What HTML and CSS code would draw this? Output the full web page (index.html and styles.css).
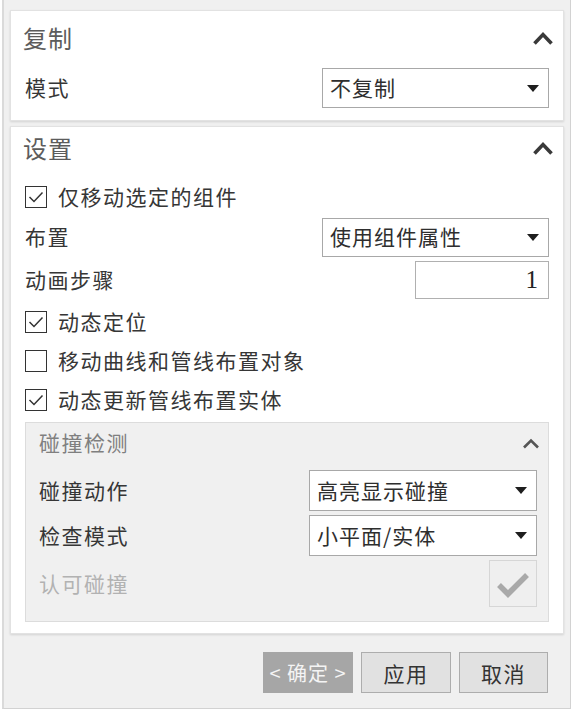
FILE: index.html
```html
<!DOCTYPE html>
<html lang="zh-CN">
<head>
  <meta charset="UTF-8">
  <title>移动组件</title>
  <link rel="stylesheet" href="styles.css">
</head>
<body>

  <div class="dialog">

    <section class="group group-copy">
      <div class="group-head">
        <span class="group-title">复制</span>
        <svg class="caret" width="22" height="14" viewBox="0 0 22 14"><polyline points="2.5,12.5 11,3.5 19.5,12.5" /></svg>
      </div>
      <div class="row row-select">
        <span class="label">模式</span>
        <div class="select">
          <span>不复制</span>
          <i class="arrow"></i>
        </div>
      </div>
    </section>

    <section class="group group-settings">
      <div class="group-head">
        <span class="group-title">设置</span>
        <svg class="caret" width="22" height="14" viewBox="0 0 22 14"><polyline points="2.5,12.5 11,3.5 19.5,12.5" /></svg>
      </div>

      <div class="check-row">
        <span class="box"><svg width="20" height="20" viewBox="0 0 20 20"><polyline points="3.5,10 8,14.5 16.5,5.5" /></svg></span>
        <span class="label">仅移动选定的组件</span>
      </div>

      <div class="row row-select">
        <span class="label">布置</span>
        <div class="select">
          <span>使用组件属性</span>
          <i class="arrow"></i>
        </div>
      </div>

      <div class="row row-input">
        <span class="label">动画步骤</span>
        <div class="num-input">1</div>
      </div>

      <div class="check-row">
        <span class="box"><svg width="20" height="20" viewBox="0 0 20 20"><polyline points="3.5,10 8,14.5 16.5,5.5" /></svg></span>
        <span class="label">动态定位</span>
      </div>
      <div class="check-row">
        <span class="box"></span>
        <span class="label">移动曲线和管线布置对象</span>
      </div>
      <div class="check-row">
        <span class="box"><svg width="20" height="20" viewBox="0 0 20 20"><polyline points="3.5,10 8,14.5 16.5,5.5" /></svg></span>
        <span class="label">动态更新管线布置实体</span>
      </div>

      <div class="sub">
        <div class="sub-head">
          <span class="sub-title">碰撞检测</span>
          <svg class="sub-caret" width="18" height="11" viewBox="0 0 18 11"><polyline points="2,9.5 9,2.5 16,9.5" /></svg>
        </div>
        <div class="sub-row">
          <span class="label">碰撞动作</span>
          <div class="select">
            <span>高亮显示碰撞</span>
            <i class="arrow"></i>
          </div>
        </div>
        <div class="sub-row">
          <span class="label">检查模式</span>
          <div class="select">
            <span>小平面/实体</span>
            <i class="arrow"></i>
          </div>
        </div>
        <div class="sub-row sub-row-btn">
          <span class="label disabled">认可碰撞</span>
          <button class="tick-btn" disabled>
            <svg width="38" height="34" viewBox="0 0 38 34"><polyline points="5,18 14,27 33,8" /></svg>
          </button>
        </div>
      </div>
    </section>

    <div class="footer">
      <button class="btn btn-ok">&lt; 确定 &gt;</button>
      <button class="btn">应用</button>
      <button class="btn">取消</button>
    </div>

  </div>

</body>
</html>
```

FILE: styles.css
```css
body {
  margin: 0;
  background: #fff;
  font-family: "Noto Sans CJK SC", "Microsoft YaHei", sans-serif;
  color: #363636;
  line-height: 1.2;
}

.dialog {
  box-sizing: border-box;
  width: 569px;
  margin-left: 2px;
  padding: 10px 6px 0 6px;
  background: #f0f0f0;
  border: 1px solid #d2d2d2;
  border-top: none;
  border-left-width: 2px;
  border-left-color: #dadada;
}

/* 白いカード */
.group {
  box-sizing: border-box;
  background: #fff;
  border: 1px solid #e2e2e2;
  box-shadow: 0 1px 2px rgba(0, 0, 0, 0.12);
  padding: 0 14px;
}

.group-copy {
  height: 111px;
  padding-top: 7px;
}

.group-settings {
  height: 508px;
  margin-top: 5px;
  padding-top: 1px;
}

.group-head {
  display: flex;
  justify-content: space-between;
  align-items: center;
  height: 40px;
  margin-right: -5px;
}

.group-title {
  font-size: 24px;
  letter-spacing: 1px;
  color: #5c5c5c;
  margin-left: -2px;
}

.caret polyline {
  fill: none;
  stroke: #3a3a3a;
  stroke-width: 3.6;
}

.label {
  font-size: 21px;
  letter-spacing: 1.5px;
  white-space: nowrap;
}

.label.disabled {
  color: #b2b2b2;
}

.row {
  display: flex;
  justify-content: space-between;
  align-items: center;
}

.group-copy .row-select {
  height: 40px;
  margin-top: 10px;
}

.group-settings .row-select {
  height: 42px;
}

.row-input {
  height: 44px;
}

.select {
  box-sizing: border-box;
  display: flex;
  justify-content: space-between;
  align-items: center;
  width: 227px;
  height: 39px;
  padding: 0 9px 0 7px;
  background: #fff;
  border: 1px solid #a8a8a8;
  font-size: 21px;
  letter-spacing: 1px;
  color: #2e2e2e;
}

.group-copy .select {
  height: 40px;
}

.arrow {
  width: 0;
  height: 0;
  border-left: 6.5px solid transparent;
  border-right: 6.5px solid transparent;
  border-top: 7px solid #1e1e1e;
}

.num-input {
  box-sizing: border-box;
  width: 134px;
  height: 38px;
  padding-right: 10px;
  border: 1px solid #b0b0b0;
  background: #fff;
  text-align: right;
  font-family: "Liberation Serif", serif;
  font-size: 25px;
  line-height: 36px;
  color: #222;
}

.check-row {
  display: flex;
  align-items: center;
  height: 39px;
}

.group-head + .check-row {
  margin-top: 9px;
}

.box {
  box-sizing: border-box;
  display: flex;
  align-items: center;
  justify-content: center;
  width: 22px;
  height: 22px;
  margin-right: 11px;
  border: 1px solid #333;
  background: #fff;
}

.box polyline {
  fill: none;
  stroke: #333;
  stroke-width: 1.5;
}

/* 碰撞検測のサブパネル */
.sub {
  box-sizing: border-box;
  height: 200px;
  margin-top: 3px;
  padding: 0 11px 0 13px;
  background: #f0f0f0;
  border: 1px solid #dcdcdc;
}

.sub-head {
  display: flex;
  justify-content: space-between;
  align-items: center;
  height: 40px;
  margin-right: -3px;
}

.sub-title {
  font-size: 21px;
  letter-spacing: 1.5px;
  color: #7f7f7f;
}

.sub-caret polyline {
  fill: none;
  stroke: #555;
  stroke-width: 2.6;
}

.sub-row {
  display: flex;
  justify-content: space-between;
  align-items: center;
  height: 41px;
  margin-top: 4px;
}

.sub-head + .sub-row {
  margin-top: 7px;
}

.sub .select {
  width: 228px;
  height: 41px;
}

.sub-row-btn {
  height: 47px;
}

.tick-btn {
  box-sizing: border-box;
  display: flex;
  align-items: center;
  justify-content: center;
  width: 48px;
  height: 47px;
  padding: 0;
  background: #efefef;
  border: 1px solid #d6d6d6;
}

.tick-btn polyline {
  fill: none;
  stroke: #a9a9a9;
  stroke-width: 5.5;
}

.footer {
  display: flex;
  justify-content: flex-end;
  gap: 8px;
  padding: 18px 16px 15px 0;
}

.btn {
  box-sizing: border-box;
  width: 90px;
  height: 41px;
  padding: 0;
  background: #e1e1e1;
  border: 1px solid #adadad;
  font-family: "Noto Sans CJK SC", "Microsoft YaHei", sans-serif;
  font-size: 21px;
  letter-spacing: 1.5px;
  color: #333;
}

.btn:last-child {
  width: 89px;
}

.btn-ok {
  background: #a6a6a6;
  border-color: #a6a6a6;
  color: #f4f4f4;
  font-size: 20px;
  letter-spacing: 1px;
  white-space: nowrap;
}
```
